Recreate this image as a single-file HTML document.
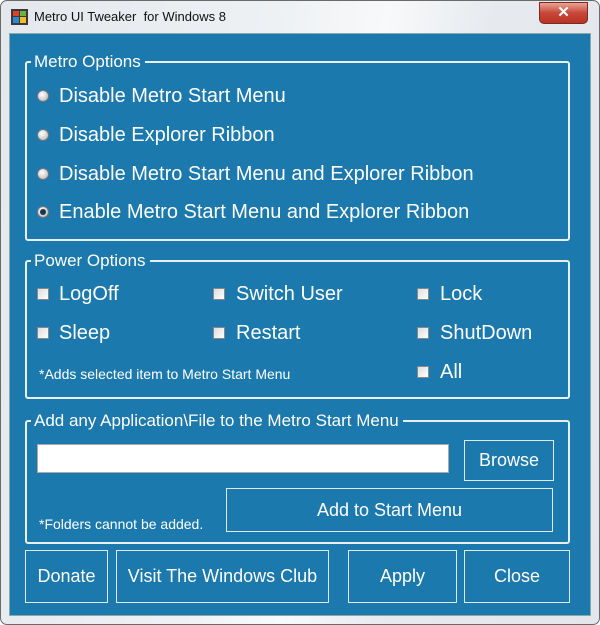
<!DOCTYPE html>
<html><head><meta charset="utf-8"><style>
*{margin:0;padding:0;box-sizing:border-box}
body{width:600px;height:625px;overflow:hidden;background:#fff;font-family:"Liberation Sans",sans-serif;position:relative}
.win{position:absolute;left:0;top:0;width:600px;height:625px;border:1px solid #6a6a6a;border-radius:7px;background:linear-gradient(100deg,#e4e8ec 0%,#eef1f4 40%,#f8f9fa 55%,#e6eaee 70%,#e3e7eb 100%)}
.title{position:absolute;left:33px;top:8px;font-size:13px;color:#111}
.icon{position:absolute;left:10px;top:8px;width:17px;height:16px}
.xbtn{position:absolute;left:538px;top:1px;width:49px;height:22px;border-radius:0 0 5px 5px;background:linear-gradient(#e8a595,#c8463a 50%,#b73424);border:1px solid #7a2a22;color:#fff;font-size:15px;font-weight:bold;text-align:center;line-height:19px}
.panel{position:absolute;left:9px;top:33px;width:582px;height:583px;background:#1b79ad;border:1px solid #8aa}
.t{position:absolute;color:#fff;white-space:nowrap;font-weight:300}
.grp{position:absolute;border:2px solid #e8f0f5;border-radius:3px}
.leg{position:absolute;background:#1b79ad;color:#fff;font-size:17px;padding:0 4px 0 3px;white-space:nowrap}
.btn{position:absolute;border:1px solid #dfe9ef;color:#fff;font-size:18px;display:flex;align-items:center;justify-content:center}
.rad{position:absolute;width:12px;height:12px;border-radius:50%;background:radial-gradient(circle at 40% 35%,#fff,#c8c8c8 70%,#999);border:1px solid #777}
.rad.on::after{content:"";position:absolute;left:2px;top:2px;width:6px;height:6px;border-radius:50%;background:#1a3550}
.chk{position:absolute;width:12px;height:12px;background:linear-gradient(135deg,#ddd,#fff);border:1px solid #888}
.big{font-size:20px}
</style></head><body>
<div class="win">
<svg class="icon" viewBox="0 0 17 16"><rect x="0" y="0" width="17" height="16" fill="#3a3a3a"/><rect x="2" y="2" width="6" height="5" fill="#e0402a"/><rect x="9" y="2" width="6" height="5" fill="#6cb43c"/><rect x="2" y="8" width="6" height="6" fill="#2a8ad8"/><rect x="9" y="8" width="6" height="6" fill="#f0c020"/></svg>
<div class="title">Metro UI Tweaker &nbsp;for Windows 8</div>
<div class="xbtn">✕</div>
</div>
<div class="panel"></div>

<div class="grp" style="left:25px;top:61px;width:545px;height:180px"></div>
<div class="leg" style="left:31px;top:52px">Metro Options</div>
<div class="rad" style="left:37px;top:90px"></div><div class="t big" style="left:59px;top:85px">Disable Metro Start Menu</div>
<div class="rad" style="left:37px;top:129px"></div><div class="t big" style="left:59px;top:124px">Disable Explorer Ribbon</div>
<div class="rad" style="left:37px;top:168px"></div><div class="t big" style="left:59px;top:163px">Disable Metro Start Menu and Explorer Ribbon</div>
<div class="rad on" style="left:37px;top:206px"></div><div class="t big" style="left:59px;top:201px">Enable Metro Start Menu and Explorer Ribbon</div>

<div class="grp" style="left:25px;top:260px;width:545px;height:139px"></div>
<div class="leg" style="left:31px;top:251px">Power Options</div>
<div class="chk" style="left:37px;top:288px"></div><div class="t big" style="left:59px;top:283px">LogOff</div>
<div class="chk" style="left:213px;top:288px"></div><div class="t big" style="left:236px;top:283px">Switch User</div>
<div class="chk" style="left:417px;top:288px"></div><div class="t big" style="left:440px;top:283px">Lock</div>
<div class="chk" style="left:37px;top:327px"></div><div class="t big" style="left:59px;top:322px">Sleep</div>
<div class="chk" style="left:213px;top:327px"></div><div class="t big" style="left:236px;top:322px">Restart</div>
<div class="chk" style="left:417px;top:327px"></div><div class="t big" style="left:440px;top:322px">ShutDown</div>
<div class="t" style="left:39px;top:366px;font-size:14px">*Adds selected item to Metro Start Menu</div>
<div class="chk" style="left:417px;top:366px"></div><div class="t big" style="left:440px;top:361px">All</div>

<div class="grp" style="left:25px;top:420px;width:545px;height:124px"></div>
<div class="leg" style="left:31px;top:411px">Add any Application\File to the Metro Start Menu</div>
<div style="position:absolute;left:37px;top:444px;width:412px;height:29px;background:#fff;border:1px solid #aaa"></div>
<div class="btn" style="left:464px;top:440px;width:90px;height:41px">Browse</div>
<div class="btn" style="left:226px;top:488px;width:327px;height:44px">Add to Start Menu</div>
<div class="t" style="left:39px;top:516px;font-size:14px">*Folders cannot be added.</div>

<div class="btn" style="left:25px;top:550px;width:83px;height:53px">Donate</div>
<div class="btn" style="left:116px;top:550px;width:213px;height:53px">Visit The Windows Club</div>
<div class="btn" style="left:348px;top:550px;width:109px;height:53px">Apply</div>
<div class="btn" style="left:464px;top:550px;width:106px;height:53px">Close</div>
</body></html>
